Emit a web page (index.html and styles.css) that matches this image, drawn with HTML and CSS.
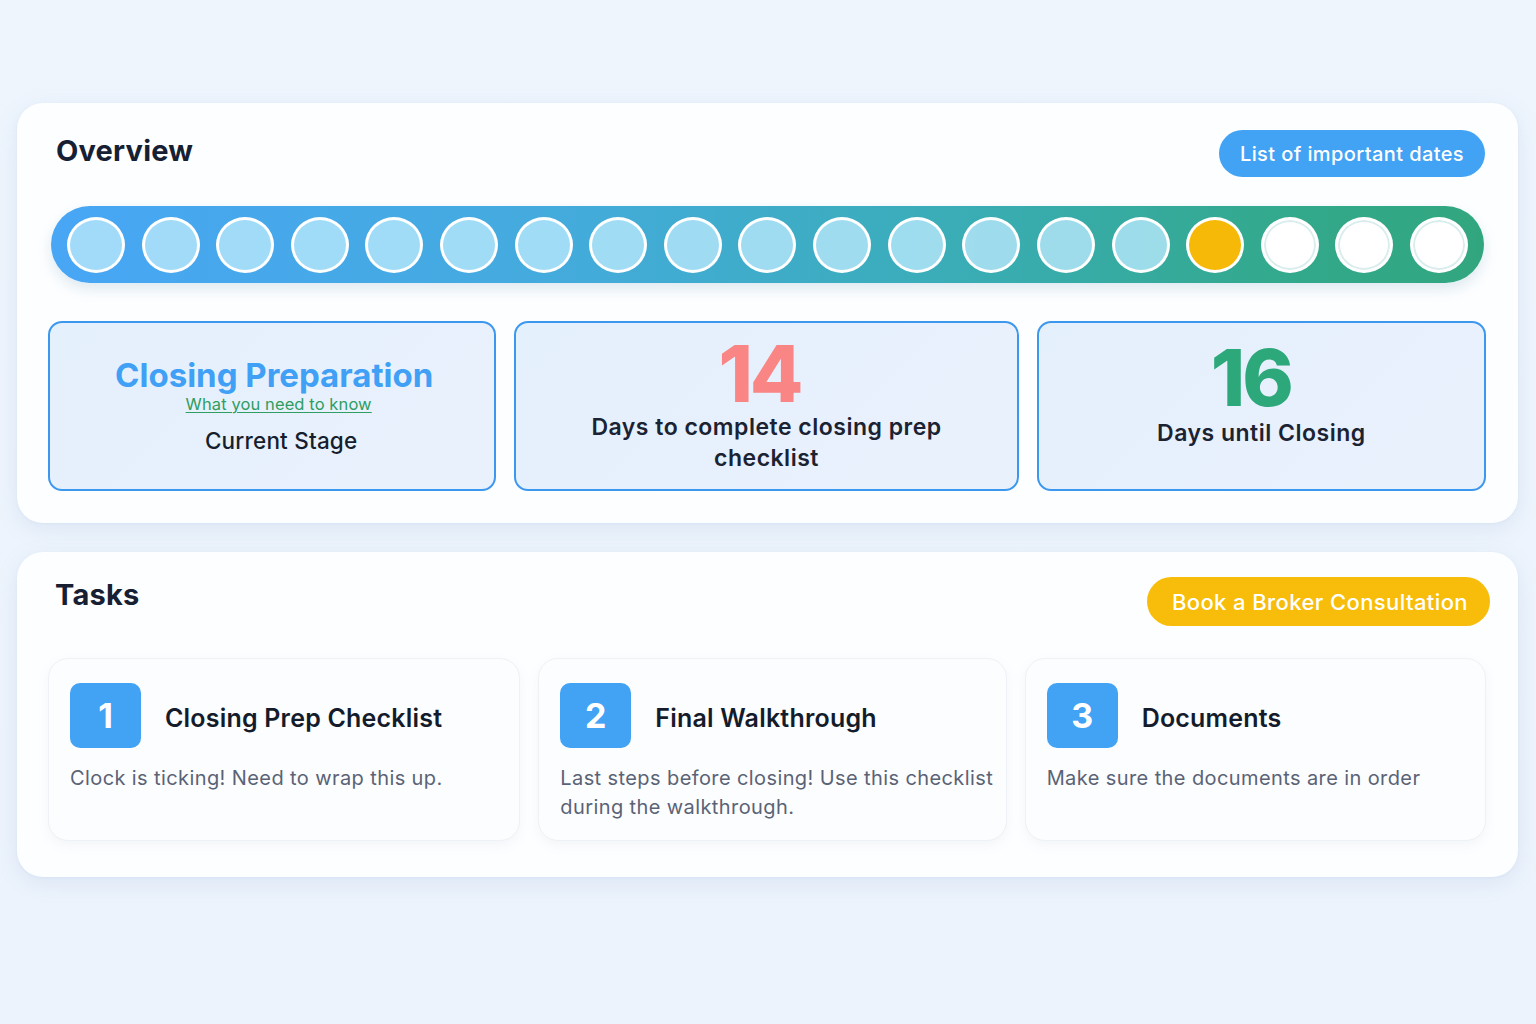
FILE: index.html
```html
<!DOCTYPE html>
<html lang="en">
<head>
<meta charset="utf-8">
<title>Closing Dashboard</title>
<link rel="stylesheet" href="styles.css">
</head>
<body>
<main class="page">
  <section class="panel overview">
    <div class="panel-head">
      <h2 class="panel-title">Overview</h2>
      <button class="pill pill-blue">List of important dates</button>
    </div>
    <div class="progress">
      <span class="dot done"></span><span class="dot done"></span><span class="dot done"></span><span class="dot done"></span><span class="dot done"></span>
      <span class="dot done"></span><span class="dot done"></span><span class="dot done"></span><span class="dot done"></span><span class="dot done"></span>
      <span class="dot done"></span><span class="dot done"></span><span class="dot done"></span><span class="dot done"></span><span class="dot done"></span>
      <span class="dot current"></span>
      <span class="dot todo"></span><span class="dot todo"></span><span class="dot todo"></span>
    </div>
    <div class="stats">
      <div class="stat stat-stage">
        <div class="stage-name">Closing Preparation</div>
        <a class="stage-link" href="#">What you need to know</a>
        <div class="stage-label">Current Stage</div>
      </div>
      <div class="stat stat-prep">
        <div class="big-num num-red">14</div>
        <div class="stat-label">Days to complete closing prep<br>checklist</div>
      </div>
      <div class="stat stat-close">
        <div class="big-num num-green">16</div>
        <div class="stat-label">Days until Closing</div>
      </div>
    </div>
  </section>

  <section class="panel tasks">
    <div class="panel-head tasks-head">
      <h2 class="panel-title tasks-title">Tasks</h2>
      <button class="pill pill-yellow">Book a Broker Consultation</button>
    </div>
    <div class="task-grid">
      <div class="task">
        <div class="task-top">
          <div class="badge">1</div>
          <div class="task-name">Closing Prep Checklist</div>
        </div>
        <p class="task-desc">Clock is ticking! Need to wrap this up.</p>
      </div>
      <div class="task">
        <div class="task-top">
          <div class="badge">2</div>
          <div class="task-name">Final Walkthrough</div>
        </div>
        <p class="task-desc">Last steps before closing! Use this checklist during the walkthrough.</p>
      </div>
      <div class="task">
        <div class="task-top">
          <div class="badge">3</div>
          <div class="task-name">Documents</div>
        </div>
        <p class="task-desc">Make sure the documents are in order</p>
      </div>
    </div>
  </section>
</main>
</body>
</html>
```
FILE: styles.css
```css
* { box-sizing: border-box; }
html, body { margin: 0; padding: 0; }
body {
  font-family: Inter, "Noto Sans", "Liberation Sans", sans-serif;
  background: linear-gradient(180deg, #eef5fd 0%, #ecf3fc 100%);
  color: #1a2233;
  min-height: 1024px;
}
.page {
  padding: 103px 18px 0 17px;
  display: flex;
  flex-direction: column;
  gap: 29px;
}
.panel {
  background: #fdfeff;
  border-radius: 26px;
  box-shadow: 0 6px 22px rgba(120, 150, 200, 0.14), 0 1px 3px rgba(120, 150, 200, 0.08);
}
.overview { padding: 27px 32px 32px 31px; }
.panel-head {
  display: flex;
  justify-content: space-between;
  align-items: center;
}
.panel-title {
  margin: 0;
  font-size: 29px;
  font-weight: 700;
  line-height: 34px;
  color: #172033;
  padding-left: 8px;
  margin-top: -6px;
  letter-spacing: 0.2px;
}
.pill {
  border: none;
  border-radius: 999px;
  color: #fff;
  font-family: inherit;
  font-weight: 500;
  cursor: pointer;
}
.pill-blue {
  background: #42a3f5;
  height: 47px;
  padding: 0 21px 0 21px;
  font-size: 20px;
  letter-spacing: 0.4px;
  margin-right: 1px;
}
.progress {
  margin: 29px 2px 0 3px;
  height: 77px;
  border-radius: 999px;
  background: linear-gradient(90deg, #48a6f5 0%, #44abdd 35%, #3aadb8 62%, #33a98e 85%, #31a67e 100%);
  display: flex;
  align-items: center;
  justify-content: space-between;
  padding: 0 16px 0 16px;
  box-shadow: 0 6px 14px rgba(80, 140, 170, 0.18);
}
.dot {
  width: 58px;
  height: 56px;
  border-radius: 50%;
  border: 3px solid #ffffff;
  flex: none;
}
.dot.done { background: rgba(180, 230, 250, 0.82); }
.dot.current { background: #f7b908; }
.dot.todo { background: #ffffff; box-shadow: inset 0 0 0 2px #d9ecee; }

.stats {
  margin-top: 38px;
  display: grid;
  grid-template-columns: 448fr 504fr 449fr;
  gap: 18px;
}
.stat {
  height: 170px;
  border: 2px solid #3c98ee;
  border-radius: 14px;
  background: linear-gradient(135deg, #e5f0fd 0%, #e9f1fc 100%);
  display: flex;
  flex-direction: column;
  align-items: center;
  text-align: center;
}
.stat-stage { padding-top: 33px; }
.stage-name {
  font-size: 33px;
  font-weight: 700;
  color: #40a0f5;
  line-height: 38px;
  margin-left: 4px;
}
.stage-link {
  font-size: 16.5px;
  color: #2e9e62;
  text-decoration: underline;
  text-decoration-thickness: 1px;
  text-underline-offset: 2px;
  line-height: 18px;
  margin-top: 1px;
  margin-left: 13px;
  letter-spacing: 0.1px;
}
.stage-label {
  font-size: 22.5px;
  font-weight: 500;
  color: #161e2e;
  margin-top: 15px;
  line-height: 26px;
  margin-left: 18px;
  letter-spacing: 0.2px;
}
.stat-prep { padding-top: 15px; }
.stat-close { padding-top: 19px; }
.big-num {
  font-size: 78px;
  font-weight: 800;
  line-height: 72px;
  letter-spacing: -3px;
}
.num-red { color: #fa8585; margin-left: -14px; }
.num-green { color: #2da87a; margin-left: -21px; }
.stat-label {
  font-size: 23px;
  font-weight: 600;
  color: #1b2333;
  line-height: 31px;
  letter-spacing: 0.5px;
}
.stat-prep .stat-label { margin-top: 2px; }
.stat-close .stat-label { margin-top: 4px; }

.tasks { padding: 25px 28px 36px 31px; }
.tasks-head { align-items: flex-start; }
.tasks-title { margin-top: 1px; padding-left: 7px; }
.pill-yellow {
  background: #f8bd0a;
  height: 49px;
  padding: 0 22px 0 25px;
  font-size: 22px;
  letter-spacing: 0.4px;
}
.task-grid {
  margin-top: 32px;
  display: grid;
  grid-template-columns: 472fr 468fr 461fr;
  gap: 18px;
  margin-right: 4px;
}
.task {
  height: 183px;
  background: #fcfdfe;
  border: 1px solid #eef1f5;
  border-radius: 20px;
  box-shadow: 0 4px 12px rgba(120, 140, 170, 0.08);
  padding: 24px 12px 0 21px;
}
.task-top {
  display: flex;
  align-items: center;
  gap: 24px;
}
.badge {
  width: 71px;
  height: 65px;
  border-radius: 10px;
  background: #42a3f5;
  color: #fff;
  font-size: 34px;
  font-weight: 700;
  display: flex;
  align-items: center;
  justify-content: center;
  flex: none;
}
.task-name {
  font-size: 25px;
  font-weight: 600;
  color: #141c2c;
  letter-spacing: 0.2px;
  margin-top: 4px;
}
.task-desc {
  margin: 16px 0 0 0;
  font-size: 20px;
  line-height: 29px;
  color: #5a6376;
  letter-spacing: 0.4px;
}
```
